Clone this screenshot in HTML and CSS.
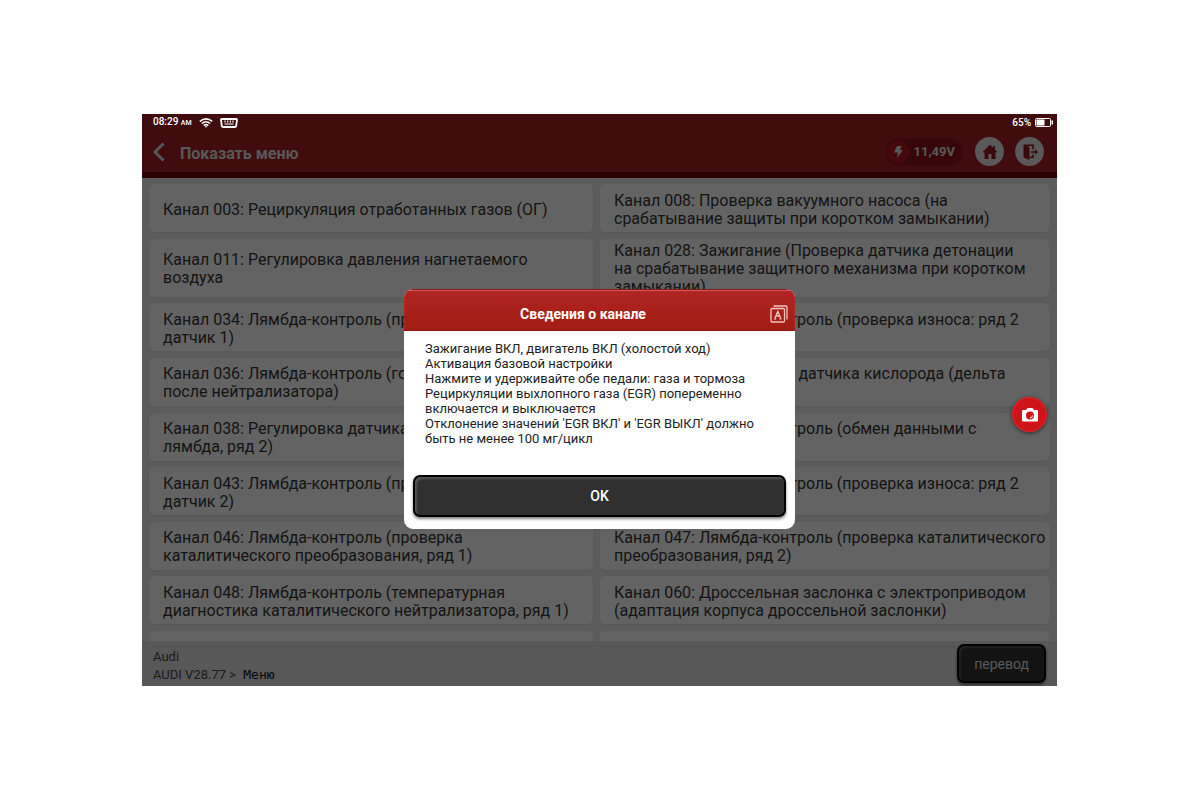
FILE: index.html
```
<!DOCTYPE html>
<html lang="ru">
  <head>
    <meta charset="UTF-8" />
    <meta name="viewport" content="width=device-width, initial-scale=1.0" />
    <title>Показать меню</title>
    <link rel="stylesheet" href="styles.css">
  </head>
  <body>
    <div class="screen">
      <!-- Status bar -->
      <div class="status">
        <span>08:29 <small>AM</small></span>
        <svg class="wifi" width="14" height="10" viewBox="0 0 14 10" fill="none" stroke="#fff" stroke-width="1.6">
          <path d="M0.8 3.4Q7-1.6 13.2 3.4M2.8 5.5Q7 2 11.2 5.5M4.7 7.5Q7 5.6 9.3 7.5" />
          <path d="M5.6 8.2h2.8L7 9.8z" fill="#fff" stroke="none" />
        </svg>
        <svg class="obd" width="18" height="10" viewBox="0 0 18 10" fill="none" stroke="#fff">
          <path d="M1.8 1h14.4q1 0 .8 1l-.8 5.8q-.3 1.2-1.4 1.2H3.200q-1.100 0-1.400-1.200L1 2q-.2-1 .8-1z" stroke-width="1.800" />
          <path d="M5 2.500v2M7.700 2.500v2M10.400 2.500v2M13 2.500v2M4.500 6h9" stroke-width="1.200" />
        </svg>
        <span class="percent">65%</span>
        <svg class="battery" width="18" height="9" viewBox="0 0 18 9">
          <rect x="0.500" y="0.500" width="15" height="8" rx="1" fill="none" stroke="#fff" />
          <path d="M1.500 1.500h8v6h-8zM16.500 2.500H18v4h-1.500z" fill="#fff" />
        </svg>
      </div>

      <header class="header">
        <button class="back" aria-label="Назад">
          <svg width="12" height="20" viewBox="0 0 12 20" fill="none" stroke="currentColor" stroke-width="3">
            <path d="M10.500 1.500L2 10l8.500 8.500" />
          </svg>
        </button>
        <h1>Показать меню</h1>
        <div class="voltage">
          <span class="bolt">
            <svg width="9" height="12" viewBox="0 0 9 12" fill="#ddd">
              <path d="M3 0h4.500L5.800 4H9L3 12l1-5.500H0z" />
            </svg>
          </span>
          11,49V
        </div>
        <button class="round" aria-label="Домой">
          <svg width="18" height="18" viewBox="0 0 18 18" fill="#8f1a1e">
            <path d="M9 1.500L1.500 9.300h2V16h4v-5h3v5h4V9.300h2L14 6.800V3h-2v1.700z" />
          </svg>
        </button>
        <button class="round" aria-label="Выход">
          <svg width="18" height="18" viewBox="0 0 18 18">
            <path d="M2.500 1.500l6 2.500v13l-6-2.500z" fill="#8f1a1e" />
            <path d="M3 2.300h9v4M12 11.500v2.700H8.500M10 9h5" fill="none" stroke="#8f1a1e" stroke-width="1.600" />
            <path d="M14 6.300L17 9l-3 2.700z" fill="#8f1a1e" />
          </svg>
        </button>
      </header>

      <main class="channels">
        <div class="card">Канал 003: Рециркуляция отработанных газов (ОГ)</div>
        <div class="card">Канал 008: Проверка вакуумного насоса (на<br>срабатывание защиты при коротком замыкании)</div>
        <div class="card">Канал 011: Регулировка давления нагнетаемого<br>воздуха</div>
        <div class="card">Канал 028: Зажигание (Проверка датчика детонации<br>на срабатывание защитного механизма при коротком<br>замыкании)</div>
        <div class="card">Канал 034: Лямбда-контроль (проверка износа: ряд 1<br>датчик 1)</div>
        <div class="card">Канал 035: Лямбда-контроль (проверка износа: ряд 2<br>датчик 1)</div>
        <div class="card">Канал 036: Лямбда-контроль (готовность датчика<br>после нейтрализатора)</div>
        <div class="card">Канал 037: Регулировка датчика кислорода (дельта<br>лямбда, ряд 1)</div>
        <div class="card">Канал 038: Регулировка датчика кислорода (дельта<br>лямбда, ряд 2)</div>
        <div class="card">Канал 039: Лямбда-контроль (обмен данными с<br>датчиками)</div>
        <div class="card">Канал 043: Лямбда-контроль (проверка износа: ряд 1<br>датчик 2)</div>
        <div class="card">Канал 044: Лямбда-контроль (проверка износа: ряд 2<br>датчик 2)</div>
        <div class="card">Канал 046: Лямбда-контроль (проверка<br>каталитического преобразования, ряд 1)</div>
        <div class="card">Канал 047: Лямбда-контроль (проверка каталитического<br>преобразования, ряд 2)</div>
        <div class="card">Канал 048: Лямбда-контроль (температурная<br>диагностика каталитического нейтрализатора, ряд 1)</div>
        <div class="card">Канал 060: Дроссельная заслонка с электроприводом<br>(адаптация корпуса дроссельной заслонки)</div>
        <div class="card next"></div>
        <div class="card next"></div>
      </main>

      <footer class="footer">
        <div class="path">
          <div>Audi</div>
          <div>AUDI V28.77 &gt; <span class="current">Меню</span></div>
        </div>
        <button class="dark-btn translate">перевод</button>
      </footer>

      <div class="overlay">
        <div class="dialog" role="dialog" aria-labelledby="dialogTitle">
          <div class="dialog-head">
            <h2 id="dialogTitle">Сведения о канале</h2>
            <button class="lang" aria-label="Перевести">
              <svg width="18" height="18" viewBox="0 0 18 18" fill="none" stroke="currentColor" stroke-width="1.300">
                <rect x="1" y="3.500" width="13.500" height="13.500" rx="1" />
                <path d="M3.500 1h12.500q1 0 1 1v12.500" />
                <path d="M5 13L7.800 6.500l2.800 6.500M6 11h3.600M4 13.800h2.200M9.400 13.800h2.200" />
              </svg>
            </button>
          </div>
          <p>
            Зажигание ВКЛ, двигатель ВКЛ (холостой ход)<br>
            Активация базовой настройки<br>
            Нажмите и удерживайте обе педали: газа и тормоза<br>
            Рециркуляции выхлопного газа (EGR) попеременно<br>
            включается и выключается<br>
            Отклонение значений 'EGR ВКЛ' и 'EGR ВЫКЛ' должно<br>
            быть не менее 100 мг/цикл
          </p>
          <button class="dark-btn ok">OK</button>
        </div>
      </div>

      <button class="camera" aria-label="Снимок экрана">
        <svg width="18" height="14" viewBox="0 0 18 14">
          <path d="M2 2h3l1.500-2h5L13 2h3q1 0 1 1v9.500q0 1-1 1H2q-1 0-1-1V3q0-1 1-1z" fill="#fff" />
          <circle cx="9" cy="7.500" r="4" fill="#cf1419" />
          <path d="M9 10q2.500 0 2.500-2.500" fill="none" stroke="#fff" />
        </svg>
      </button>
    </div>
  </body>
</html>
```

FILE: styles.css
```
* {
  box-sizing: border-box;
}

body {
  margin: 0;
  padding: 114px 143px 114px 142px;
  background: #fff;
  font-family: Roboto, "Noto Sans", sans-serif;
}

button {
  padding: 0;
  border: none;
  background: none;
  font-family: inherit;
  cursor: pointer;
}

svg {
  display: block;
}

.screen {
  position: relative;
  display: flex;
  flex-direction: column;
  min-height: calc(100vh - 228px);
  background: #e6e6e6;
  overflow: hidden;
}

.status {
  position: relative;
  z-index: 2;
  display: flex;
  align-items: center;
  height: 17px;
  padding: 0 4px 0 11px;
  margin-bottom: -17px;
  font-size: 10px;
  font-weight: 500;
  line-height: 17px;
  color: #fff;
}

.status small {
  font-size: 7px;
}

.wifi {
  margin-left: 7px;
}

.obd {
  margin-left: 7px;
}

.percent {
  margin-left: auto;
}

.battery {
  margin-left: 4px;
}

.header {
  display: flex;
  align-items: center;
  height: 64px;
  padding: 21px 13px 4px 11px;
  background: #a01e24;
  border-bottom: 6px solid #6e0000;
  color: #ddd;
}

.back {
  color: #ddd;
  margin-right: 15px;
}

.header h1 {
  flex: 1;
  margin: 0;
  padding-top: 4px;
  font-size: 16px;
  font-weight: 700;
  line-height: 20px;
}

.voltage {
  display: flex;
  align-items: center;
  gap: 4px;
  height: 24px;
  padding-right: 6px;
  margin-right: 14px;
  border-radius: 12px;
  background: #8a1014;
  box-shadow: 0 0 3px #6e0000;
  font-size: 13px;
  font-weight: 700;
}

.bolt {
  display: flex;
  align-items: center;
  justify-content: center;
  width: 22px;
  height: 22px;
  border-radius: 50%;
  background: #b2161c;
}

.round {
  display: flex;
  align-items: center;
  justify-content: center;
  width: 29px;
  height: 29px;
  border-radius: 50%;
  background: #e0dcdc;
}

.round + .round {
  margin-left: 11px;
}

.channels {
  flex: 1;
  display: grid;
  grid-template-columns: 444fr 450fr;
  grid-template-rows: 48px 58px repeat(6, 48px) 10px;
  column-gap: 7px;
  align-content: space-between;
  padding: 6px 7px 0;
}

.card {
  display: flex;
  align-items: center;
  padding: 3px 0 0 14px;
  border-radius: 6px;
  background: #f8f8f8;
  box-shadow: 0 1px 2px #dcdcdc;
  font-size: 16px;
  line-height: 18px;
  color: #333;
  white-space: nowrap;
}

.next {
  border-radius: 6px 6px 0 0;
}

.footer {
  display: flex;
  align-items: center;
  justify-content: space-between;
  height: 45px;
  padding: 0 11px;
  background: #dcdcdc;
}

.path {
  padding-top: 5px;
  font-size: 13px;
  line-height: 18px;
  color: #444;
}

.current {
  margin-left: 4px;
  font-family: "DejaVu Sans Mono", monospace;
  color: #111;
}

.dark-btn {
  border: 2px solid #000;
  border-radius: 7px;
  background: #303030;
  box-shadow: inset 2px 2px 2px #555, 0 2px 3px rgba(0, 0, 0, 0.5);
  color: #fff;
}

.translate {
  width: 89px;
  height: 39px;
  font-size: 14px;
  color: #ddd;
}

/* Dimmed layer with the dialog on top */
.overlay {
  position: absolute;
  inset: 0;
  display: flex;
  align-items: center;
  justify-content: center;
  padding-top: 18px;
  background: rgba(0, 0, 0, 0.6);
}

.dialog {
  width: 391px;
  border-radius: 9px;
  background: #fff;
  overflow: hidden;
}

.dialog-head {
  display: flex;
  align-items: center;
  height: 42px;
  padding: 8px 7px 0 0;
  border-top: 1px solid #8c1512;
  border-bottom: 1px solid #8c1512;
  background: linear-gradient(#b12424, #a11d13);
  box-shadow: inset 0 1px 1px #d06060;
  color: #fff;
}

.dialog-head h2 {
  flex: 1;
  margin: 0;
  font-size: 14px;
  font-weight: 700;
  line-height: 18px;
  text-align: center;
}

.lang {
  margin-left: 8px;
  color: #f2c4c0;
}

.dialog p {
  margin: 10px 21px 29px;
  font-size: 13px;
  line-height: 15px;
  color: #222;
}

.ok {
  display: block;
  width: calc(100% - 18px);
  height: 42px;
  margin: 0 9px 12px;
  font-size: 14px;
  font-weight: 500;
}

.camera {
  position: absolute;
  right: 10px;
  top: 283px;
  display: flex;
  align-items: center;
  justify-content: center;
  width: 35px;
  height: 35px;
  border-radius: 50%;
  background: #cf1419;
  box-shadow: 0 1px 4px rgba(0, 0, 0, 0.6), inset 0 0 2px #f05050;
}
```
